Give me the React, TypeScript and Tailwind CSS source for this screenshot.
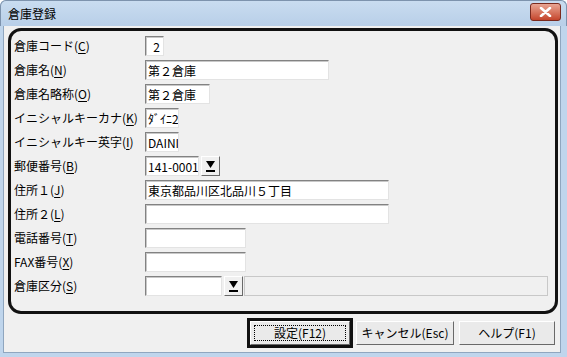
import React from 'react';

type Row = {
  label: string;
  key: string;
  after?: string;
  value?: string;
  width: number;
  combo?: boolean;
  extra?: boolean;
};

const ROWS: Row[] = [
  { label: '倉庫コード(', key: 'C', after: ')', value: '2', width: 19 },
  { label: '倉庫名(', key: 'N', after: ')', value: '第２倉庫', width: 184 },
  { label: '倉庫名略称(', key: 'O', after: ')', value: '第２倉庫', width: 65 },
  { label: 'イニシャルキーカナ(', key: 'K', after: ')', value: 'ﾀﾞｲﾆ2', width: 34 },
  { label: 'イニシャルキー英字(', key: 'I', after: ')', value: 'DAINI', width: 34 },
  { label: '郵便番号(', key: 'B', after: ')', value: '141-0001', width: 54, combo: true },
  { label: '住所１(', key: 'J', after: ')', value: '東京都品川区北品川５丁目', width: 244 },
  { label: '住所２(', key: 'L', after: ')', value: '', width: 244 },
  { label: '電話番号(', key: 'T', after: ')', value: '', width: 101 },
  { label: 'FAX番号(', key: 'X', after: ')', value: '', width: 101 },
  { label: '倉庫区分(', key: 'S', after: ')', value: '', width: 77, combo: true, extra: true },
];

function Sunken({ width, value, right }: { width: number; value?: string; right?: boolean }) {
  return (
    <div
      className="h-[20px] border border-t-[#828282] border-l-[#828282] border-r-[#e3e3e3] border-b-[#e3e3e3] bg-white"
      style={{ width }}
    >
      <div
        className={`h-full border-t border-l border-[#c8c8c8] leading-[17px] whitespace-nowrap overflow-hidden ${
          right ? 'text-right pr-[3px]' : 'pl-[1px]'
        }`}
      >
        {value}
      </div>
    </div>
  );
}

function DropButton() {
  return (
    <div className="w-[19px] h-[20px] bg-[#f0f0f0] border border-t-white border-l-white border-r-[#696969] border-b-[#696969] flex items-center justify-center">
      <svg width="11" height="12" viewBox="0 0 11 12">
        <path d="M1 1h9L5.5 8z" fill="#000" />
        <rect x="1" y="10" width="9" height="2" fill="#000" />
      </svg>
    </div>
  );
}

export default function App() {
  return (
    <div
      className="w-[567px] h-[357px] bg-[#bfd5ec] rounded-t-[6px] flex flex-col text-[12px] text-black"
      style={{ fontFamily: '"Noto Sans CJK JP", "Noto Sans", sans-serif' }}
    >
      {/* title bar */}
      <div className="h-[26px] flex items-center justify-between pl-[7px] pr-[5px] bg-gradient-to-b from-[#c9dcf0] to-[#b8cfe8] rounded-t-[6px] border border-b-0 border-[#7d93ad]">
        <span className="text-[12px] leading-none">倉庫登録</span>
        <div className="w-[31px] h-[18px] -mt-[4px] rounded-[3px] border border-[#7a2a1e] bg-gradient-to-b from-[#e8a593] to-[#c4442b] flex items-center justify-center">
          <svg width="13" height="10" viewBox="0 0 13 10">
            <path d="M2 1l9 8M11 1l-9 8" stroke="#fff" strokeWidth="2.6" strokeLinecap="round" />
          </svg>
        </div>
      </div>

      {/* client area */}
      <div className="flex-1 ml-[3px] mr-[6px] mb-[4px] bg-[#f0f0f0] border border-[#8fa6bf] border-t-0 flex flex-col">
        <div className="mt-[2px] ml-[4px] mr-[2px] h-[286px] border-[3px] border-[#111] rounded-[13px] pt-[5px] pl-[3px] pr-[7px] flex flex-col gap-[4px]">
          {ROWS.map((r) => (
            <div key={r.key} className="flex items-center h-[20px]">
              <div className="w-[131px] whitespace-nowrap leading-none">
                {r.label}
                <span className="underline underline-offset-[2px]">{r.key}</span>
                {r.after}
              </div>
              <Sunken width={r.width} value={r.value} right={r.key === 'C'} />
              {r.combo && (
                <div className="ml-[2px]">
                  <DropButton />
                </div>
              )}
              {r.extra && (
                <div className="ml-[1px] flex-1 h-[20px] border border-[#c8c8c8] bg-[#f0f0f0]" />
              )}
            </div>
          ))}
        </div>

        {/* buttons */}
        <div className="flex items-center justify-end mt-[4px] pr-[5px] gap-[3px]">
          <div className="border-[3px] border-[#111]">
            <div className="w-[100px] h-[24px] bg-[#eaeaea] border border-t-white border-l-white border-r-[#696969] border-b-[#696969] flex items-center justify-center">
              <div className="w-[92px] h-[16px] border border-dotted border-black flex items-center justify-center leading-none">
                設定(F12)
              </div>
            </div>
          </div>
          <div className="w-[98px] h-[24px] bg-[#eaeaea] border border-t-white border-l-white border-r-[#696969] border-b-[#696969] flex items-center justify-center leading-none">
            キャンセル(Esc)
          </div>
          <div className="w-[96px] h-[24px] ml-[2px] bg-[#eaeaea] border border-t-white border-l-white border-r-[#696969] border-b-[#696969] flex items-center justify-center leading-none">
            ヘルプ(F1)
          </div>
        </div>
      </div>
    </div>
  );
}
